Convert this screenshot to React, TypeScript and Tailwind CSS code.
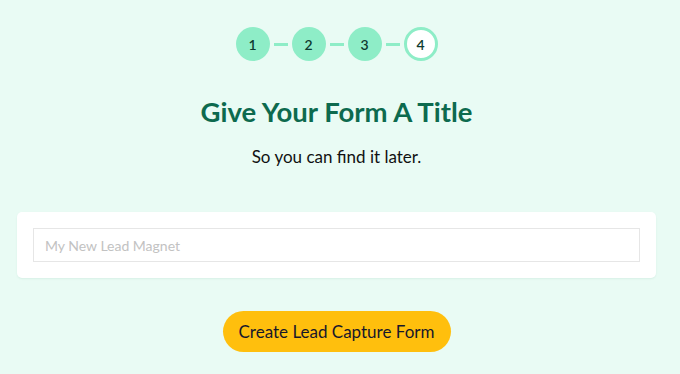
import { useState } from "react"

const steps = [1, 2, 3, 4]
const current = 4

function Stepper() {
  return (
    <div className="flex items-center justify-center">
      {steps.map((n, i) => (
        <div key={n} className="flex items-center">
          {i > 0 && <div className="mx-[4px] h-[3px] w-[14px] bg-[#8eedc7]" />}
          <div
            className={
              n === current
                ? "flex h-[34px] w-[34px] items-center justify-center rounded-full border-[3px] border-[#8eedc7] bg-white text-[14px] font-semibold text-[#0e3b30]"
                : "flex h-[34px] w-[34px] items-center justify-center rounded-full bg-[#8eedc7] text-[14px] font-semibold text-[#0e3b30]"
            }
          >
            {n}
          </div>
        </div>
      ))}
    </div>
  )
}

export default function App() {
  const [title, setTitle] = useState("")

  return (
    <div className="min-h-[374px] bg-[#e9fbf4] pl-[17px] pr-[24px] pt-[27px] font-['Lato','Noto_Sans',sans-serif] text-[#111827]">
      <Stepper />

      <h1 className="mt-[35px] text-center text-[27.5px] font-bold leading-[32px] text-[#0d6a4e]">
        Give Your Form A Title
      </h1>
      <p className="mt-[17px] text-center text-[17px] leading-[24px] text-[#111]">So you can find it later.</p>

      {/* Title card */}
      <div className="mt-[43px] rounded-[5px] bg-white p-[16px] shadow-[0_1px_2px_rgba(16,120,80,0.08)]">
        <input
          value={title}
          onChange={(e) => setTitle(e.target.value)}
          placeholder="My New Lead Magnet"
          className="h-[34px] w-full border border-[#e6e6e6] px-[11px] text-[14px] text-[#333] outline-none placeholder:text-[#c2c2c2]"
        />
      </div>

      <div className="mt-[33px] flex justify-center">
        <button
          type="button"
          className="h-[41px] w-[228px] rounded-full bg-[#ffbf0d] text-[17px] text-[#17172b]"
        >
          Create Lead Capture Form
        </button>
      </div>
    </div>
  )
}
